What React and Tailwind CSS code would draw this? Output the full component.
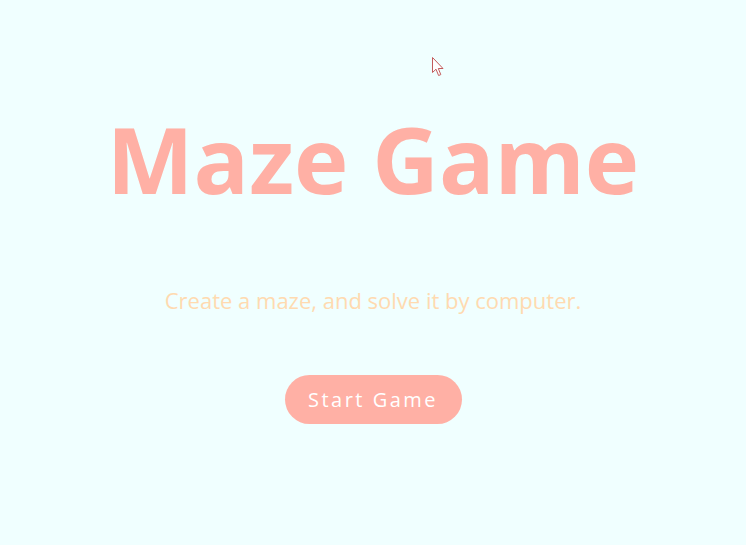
import React from 'react';

const Cursor = () => (
  <svg
    className="absolute left-[432px] top-[57px]"
    width="13"
    height="20"
    viewBox="0 0 13 20"
  >
    <path
      d="M0.5 0.5 L0.5 15.5 L4 12.2 L6.6 18.5 L8.8 17.6 L6.3 11.5 L11 11.5 Z"
      fill="#ffffff"
      stroke="#c25c5c"
      strokeWidth="1"
      strokeLinejoin="miter"
    />
  </svg>
);

export default function App() {
  return (
    <div className="relative w-full h-[545px] bg-[#f0ffff] overflow-hidden font-['Open_Sans',sans-serif]">
      <Cursor />
      <div className="flex flex-col items-center pt-[97px]">
        <h1 className="text-[92px] leading-[124px] font-bold text-[#ffb0a5]">
          Maze Game
        </h1>
        <p className="mt-[63px] text-[22px] leading-[32px] text-[#ffdab0]">
          Create a maze, and solve it by computer.
        </p>
        <button className="mt-[59px] w-[177px] h-[49px] rounded-full bg-[#ffb0a5] text-white text-[20px] tracking-[2.5px]">
          Start Game
        </button>
      </div>
    </div>
  );
}
